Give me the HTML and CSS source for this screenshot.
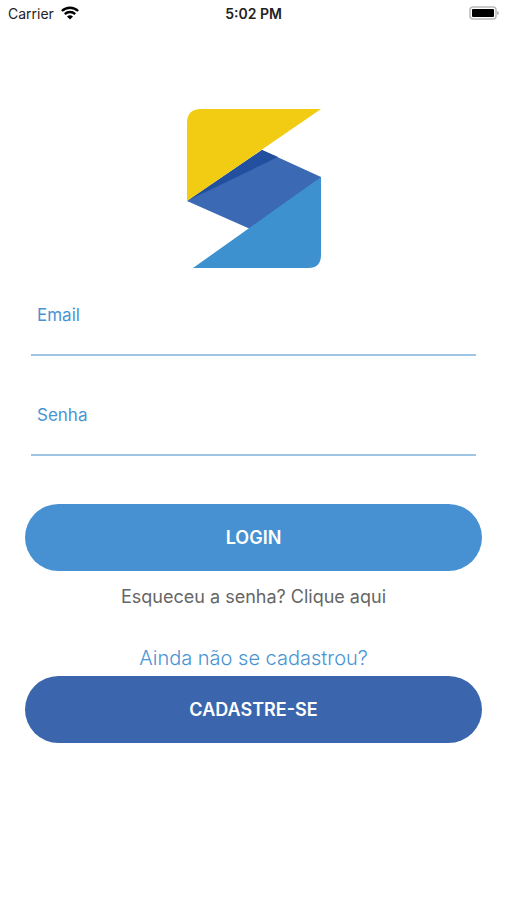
FILE: index.html
```html
<!DOCTYPE html>
<html lang="pt-BR">
<head>
  <meta charset="utf-8">
  <meta name="viewport" content="width=device-width, initial-scale=1">
  <title>Login</title>
  <link rel="stylesheet" href="styles.css">
</head>
<body>
  <header class="status">
    <div class="status-network">
      <span>Carrier</span>
      <svg class="wifi" viewBox="0 0 18 14" aria-hidden="true">
        <path d="M.9 5C5.4 .6 12.6 .6 17.1 5" />
        <path d="M3.8 8.1C6.8 5.3 11.2 5.3 14.2 8.1" />
        <path class="wifi-dot" d="M6 10.5Q9 8 12 10.5L9 13.6Z" />
      </svg>
    </div>
    <time class="status-time">5:02 PM</time>
    <svg class="battery" viewBox="0 0 30 14" aria-hidden="true">
      <rect class="battery-shell" x="1" y="1" width="26" height="12" rx="3" />
      <rect x="3" y="3" width="22" height="8" rx="1" />
      <path class="battery-tip" d="M28 5Q30 5.5 30 7T28 9Z" />
    </svg>
  </header>

  <main class="screen">
    <svg class="logo" viewBox="0 0 134 160" role="img" aria-label="Logo">
      <path fill="#3c69b3" d="M0 92L75 41L134 68V70L63 120L61 119Z" />
      <path fill="#234f9f" d="M0 92L75 41L91 48Z" />
      <path fill="#f1cc12" d="M0 92V14Q0 0 14 0H134Z" />
      <path fill="#3e91cf" d="M134 68V146Q134 159 121 159H6Z" />
    </svg>

    <form class="form">
      <div class="field">
        <label for="email">Email</label>
        <input id="email" type="email">
      </div>
      <div class="field">
        <label for="senha">Senha</label>
        <input id="senha" type="password">
      </div>
      <button class="button button-login" type="submit">LOGIN</button>
    </form>

    <a class="forgot" href="#senha">Esqueceu a senha? Clique aqui</a>
    <p class="signup-text">Ainda não se cadastrou?</p>
    <button class="button button-signup" type="button">CADASTRE-SE</button>
  </main>
</body>
</html>
```

FILE: styles.css
```css
* {
  box-sizing: border-box;
}

body {
  margin: 0;
  background: #fff;
  font-family: Inter, "Liberation Sans", sans-serif;
}

.status {
  display: grid;
  grid-template-columns: 1fr auto 1fr;
  align-items: center;
  height: 26px;
  padding: 0 8px;
  font-size: 14px;
  color: #222;
}

.status-network {
  display: flex;
  align-items: center;
  gap: 7px;
}

.status-time {
  font-weight: 600;
}

.wifi {
  width: 18px;
  height: 14px;
  fill: none;
  stroke: #000;
  stroke-width: 2.4;
}

.wifi .wifi-dot {
  fill: #000;
  stroke: none;
}

.battery {
  justify-self: end;
  width: 30px;
  height: 14px;
}

.battery-shell {
  fill: #fff;
  stroke: #bbb;
  stroke-width: 1.5;
}

.battery-tip {
  fill: #bbb;
}

.screen {
  display: flex;
  flex-direction: column;
  align-items: center;
  padding: 83px 25px 24px;
}

.logo {
  width: 134px;
  height: 160px;
}

.form {
  width: 100%;
  margin-top: 35px;
}

.field {
  margin: 0 6px 48px;
}

.field label {
  display: block;
  padding-left: 6px;
  font-size: 17px;
  line-height: 22px;
  color: #4a94d3;
}

.field input {
  display: block;
  width: 100%;
  height: 30px;
  padding: 0 6px;
  border: 0;
  border-bottom: 2px solid #9fc5e3;
  outline: 0;
  background: transparent;
  font: inherit;
  font-size: 17px;
}

.button {
  display: block;
  width: 100%;
  height: 67px;
  padding: 0;
  border: 0;
  border-radius: 36px;
  font: inherit;
  font-size: 18px;
  font-weight: 600;
  color: #fff;
}

.button-login {
  background: #4791d2;
}

.button-signup {
  background: #3b66ad;
}

.forgot {
  margin-top: 14px;
  font-size: 18px;
  line-height: 24px;
  color: #666;
  text-decoration: none;
}

.signup-text {
  margin: 35px 0 4px;
  font-size: 20px;
  font-weight: 300;
  line-height: 28px;
  color: #4a94d3;
}
```
